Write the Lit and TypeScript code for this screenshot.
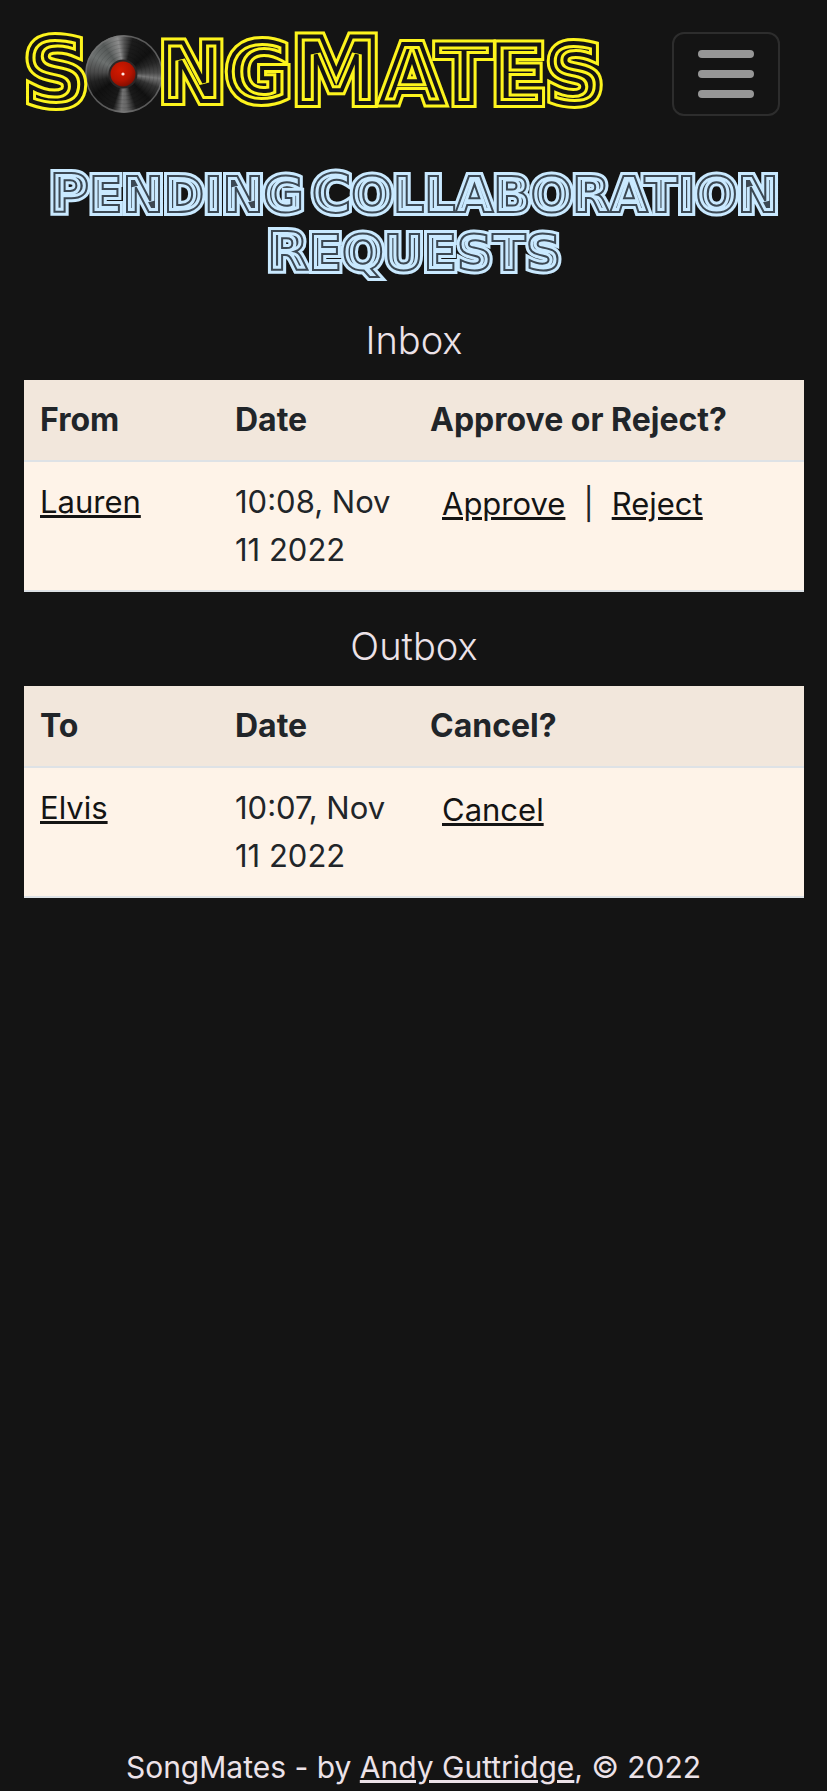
import { LitElement, html, css, nothing } from "lit";
import { customElement, property, state } from "lit/decorators.js";

/** One word in the striped display face: a larger capital (unless `flat`), then the rest in small capitals. */
@customElement("striped-word")
export class StripedWord extends LitElement {
  @property() word = "";
  @property({ type: Boolean }) flat = false;

  static styles = css`
    :host {
      display: inline-flex;
      align-items: baseline;
      white-space: nowrap;
      font-family: "DejaVu Sans", Inter, sans-serif;
      font-weight: 700;
      text-transform: uppercase;
    }
    .run {
      position: relative;
      color: var(--core);
      -webkit-text-stroke: var(--outer) var(--line);
      stroke-linejoin: round;
    }
    .cap {
      font-size: var(--cap-size);
    }
    .run::after {
      content: attr(data-text);
      position: absolute;
      left: 0;
      top: 0;
      color: transparent;
      -webkit-text-stroke: var(--inner) var(--core);
    }
  `;

  render() {
    const split = this.flat ? 0 : 1;
    const cap = this.word.slice(0, split);
    const rest = this.word.slice(split);
    return html`${cap ? html`<span class="run cap" data-text=${cap}>${cap}</span>` : nothing}${rest
        ? html`<span class="run" data-text=${rest}>${rest}</span>`
        : nothing}`;
  }
}

@customElement("vinyl-record")
export class VinylRecord extends LitElement {
  static styles = css`
    :host {
      display: block;
    }
    .disc {
      width: 78px;
      height: 78px;
      border-radius: 50%;
      background: conic-gradient(
        from 0deg,
        #555 0deg, #1c1c1c 14deg, #111 50deg, #272727 70deg, #4c4c4c 88deg, #777 97deg,
        #333 112deg, #111 135deg, #1b1b1b 160deg, #666 176deg, #737373 184deg, #191919 198deg,
        #101010 235deg, #222 256deg, #4a4a4a 274deg, #6d7170 300deg, #565a59 325deg,
        #8c8c8c 350deg, #555 360deg
      );
    }
    svg {
      display: block;
    }
  `;

  render() {
    return html`<div class="disc">
      <svg width="78" height="78" viewBox="0 0 78 78" aria-hidden="true">
        <defs>
          <radialGradient id="label" cx="0.4" cy="0.35" r="0.7">
            <stop offset="0" stop-color="#d31a00" />
            <stop offset="0.6" stop-color="#b51400" />
            <stop offset="1" stop-color="#7d0d00" />
          </radialGradient>
        </defs>
        <g fill="none" stroke="#000" stroke-opacity="0.1">
          <circle cx="39" cy="39" r="34" />
          <circle cx="39" cy="39" r="30" />
          <circle cx="39" cy="39" r="26" />
          <circle cx="39" cy="39" r="22" />
          <circle cx="39" cy="39" r="18" />
        </g>
        <circle cx="39" cy="39" r="38" fill="none" stroke="#777" stroke-opacity="0.7" stroke-width="1.5" />
        <circle cx="38" cy="39" r="14.5" fill="#2c2626" />
        <circle cx="38" cy="39" r="12.5" fill="url(#label)" />
        <circle cx="38" cy="39" r="1.6" fill="#ffe9e4" />
      </svg>
    </div>`;
  }
}

interface Action {
  label: string;
}
interface Request {
  name: string;
  date: string;
  actions: Action[];
}
interface Box {
  title: string;
  columns: string[];
  requests: Request[];
}

@customElement("app-root")
export class AppRoot extends LitElement {
  @state() private menuOpen = false;

  private boxes: Box[] = [
    {
      title: "Inbox",
      columns: ["From", "Date", "Approve or Reject?"],
      requests: [
        { name: "Lauren", date: "10:08, Nov 11 2022", actions: [{ label: "Approve" }, { label: "Reject" }] },
      ],
    },
    {
      title: "Outbox",
      columns: ["To", "Date", "Cancel?"],
      requests: [{ name: "Elvis", date: "10:07, Nov 11 2022", actions: [{ label: "Cancel" }] }],
    },
  ];

  static styles = css`
    :host {
      display: flex;
      flex-direction: column;
      min-height: 100vh;
      box-sizing: border-box;
      background: #141414;
      color: #ece2e8;
      font-family: Inter, sans-serif;
      font-size: 32px;
      line-height: 48px;
    }
    header {
      display: flex;
      align-items: center;
      justify-content: space-between;
      padding: 30px 47px 48px 24px;
    }
    .logo {
      display: flex;
      align-items: center;
      color: inherit;
      text-decoration: none;
      font-size: 80px;
      line-height: 84px;
      --cap-size: 90px;
      --line: #fdf41d;
      --core: #141414;
      --outer: 10px;
      --inner: 4px;
    }
    .logo vinyl-record {
      margin: 0 -4px;
    }
    .toggler {
      display: flex;
      flex-direction: column;
      justify-content: center;
      align-items: center;
      gap: 12px;
      width: 108px;
      height: 84px;
      padding: 0;
      border: 2px solid #2d2d2d;
      border-radius: 12px;
      background: none;
      cursor: pointer;
    }
    .bar {
      width: 56px;
      height: 8px;
      border-radius: 4px;
      background: #969696;
    }
    main {
      flex: 1;
      padding: 0 23px 0 24px;
    }
    h1 {
      display: flex;
      flex-wrap: wrap;
      justify-content: center;
      column-gap: 8px;
      margin: 0 0 34px;
      font-size: 49px;
      line-height: 56px;
      --cap-size: 54px;
      --line: #c9e9ff;
      --core: #3c4853;
      --outer: 8px;
      --inner: 2px;
    }
    h2 {
      margin: 0 0 16px;
      font-size: 38px;
      line-height: 48px;
      font-weight: 300;
      text-align: center;
    }
    table {
      width: 100%;
      margin-bottom: 30px;
      border-collapse: separate;
      border-spacing: 0;
      table-layout: fixed;
      background: #fef3e8;
      color: #212529;
    }
    th,
    td {
      box-sizing: border-box;
      padding: 16px;
      text-align: left;
      vertical-align: top;
      border-bottom: 2px solid #dee2e6;
    }
    th {
      background: #f2e7dc;
      font-weight: 700;
    }
    td {
      font-size: 31px;
    }
    .narrow {
      width: 25%;
    }
    td a {
      color: #141414;
    }
    .actions {
      display: flex;
      gap: 18px;
      padding: 2px 12px 0;
    }
    footer {
      text-align: center;
      font-size: 30px;
    }
    footer a {
      color: inherit;
    }
  `;

  private renderBox(box: Box) {
    return html`<section>
      <h2>${box.title}</h2>
      <table>
        <thead>
          <tr>
            ${box.columns.map((c, i) => html`<th scope="col" class=${i < 2 ? "narrow" : "wide"}>${c}</th>`)}
          </tr>
        </thead>
        <tbody>
          ${box.requests.map(
            (r) => html`<tr>
              <td><a href="#profile">${r.name}</a></td>
              <td>${r.date}</td>
              <td>
                <div class="actions">
                  ${r.actions.map(
                    (a, i) => html`${i ? html`<span>|</span>` : nothing}<a href="#request">${a.label}</a>`
                  )}
                </div>
              </td>
            </tr>`
          )}
        </tbody>
      </table>
    </section>`;
  }

  render() {
    return html`
      <header>
        <a class="logo" href="#home" aria-label="SongMates">
          <striped-word word="S"></striped-word>
          <vinyl-record></vinyl-record>
          <striped-word word="ng" flat></striped-word>
          <striped-word word="Mates"></striped-word>
        </a>
        <button
          class="toggler"
          type="button"
          aria-label="Toggle navigation"
          aria-expanded=${this.menuOpen}
          @click=${() => (this.menuOpen = !this.menuOpen)}
        >
          <span class="bar"></span><span class="bar"></span><span class="bar"></span>
        </button>
      </header>
      <main>
        <h1>
          ${["Pending", "Collaboration", "Requests"].map((w) => html`<striped-word word=${w}></striped-word>`)}
        </h1>
        ${this.boxes.map((b) => this.renderBox(b))}
      </main>
      <footer>SongMates - by <a href="#author">Andy Guttridge</a>, © 2022</footer>
    `;
  }
}
